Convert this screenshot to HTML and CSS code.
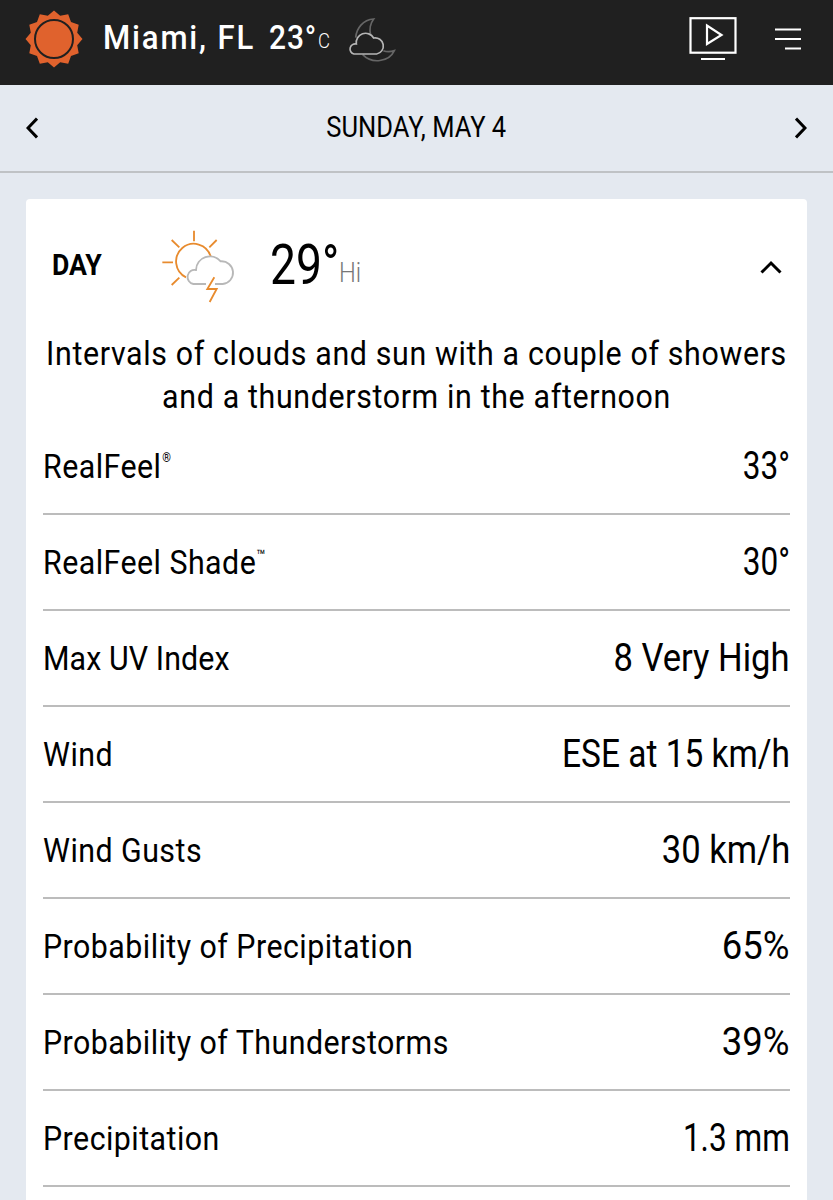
FILE: index.html
```
<!DOCTYPE html>
<html lang="en">
<head>
    <meta charset="UTF-8">
    <title>Miami, FL Daily Weather</title>
    <link rel="stylesheet" href="styles.css">
</head>
<body>
    <header class="header">
        <svg class="logo" viewBox="-30 -30 60 60">
            <polygon points="0,-28.5 6.2,-23.2 14.2,-24.7 17,-17 24.7,-14.2 23.2,-6.2 28.5,0 23.2,6.2 24.7,14.2 17,17 14.2,24.7 6.2,23.2 0,28.5 -6.2,23.2 -14.2,24.7 -17,17 -24.7,14.2 -23.2,6.2 -28.5,0 -23.2,-6.2 -24.7,-14.2 -17,-17 -14.2,-24.7 -6.2,-23.2"/>
            <circle r="19"/>
        </svg>
        <div class="city"><span class="narrow">Miami, FL</span></div>
        <div class="now"><span class="narrow">23°</span></div>
        <div class="unit"><span class="narrow">C</span></div>
        <svg class="moon" viewBox="354 50 150 138">
            <path class="crescent" d="M380 112C382 84 402 58 434 56C422 72 421 88 425 104M463 151C474 155 486 154 496 151C480 186 428 191 401 163"/>
            <path class="cloud" d="M375 161A15 15 0 0 1 382 131A28 28 0 0 1 434 113A24 24 0 0 1 443 161Z"/>
        </svg>
        <svg class="tv" viewBox="0 0 48 44">
            <rect x="1.5" y="1.2" width="45" height="34.5"/>
            <path d="M18 8.5V27L32.5 18ZM12 42H36"/>
        </svg>
        <svg class="menu" viewBox="0 0 26 24">
            <path d="M0 2.5H26M0 12H26M10 21.5H26"/>
        </svg>
    </header>

    <nav class="date-bar">
        <svg class="arrow" viewBox="0 0 12 22"><path d="M11 1.5L2 11L11 20.5"/></svg>
        <div class="date"><span class="narrow">SUNDAY, MAY 4</span></div>
        <svg class="arrow" viewBox="0 0 12 22"><path d="M1 1.5L10 11L1 20.5"/></svg>
    </nav>

    <main class="card">
        <div class="card-head">
            <div class="day"><span class="narrow">DAY</span></div>
            <svg class="day-icon" viewBox="420 115 228 228">
                <path class="sun" d="M572 200A53 53 0 1 0 498 263M522 123V155M455 151L478 173M590 151L568 173M427 218H459M455 286L478 264"/>
                <path class="cloud" d="M558 283H520A21 21 0 0 1 528 241A42 42 0 0 1 602 215A34 34 0 0 1 608 283H585"/>
                <path class="bolt" d="M583 263L562 298H590L569 337"/>
            </svg>
            <div class="high"><span class="narrow">29°</span></div>
            <div class="hi"><span class="narrow">Hi</span></div>
            <svg class="chevron" viewBox="0 0 22 14"><path d="M1.5 12.5L11 3L20.5 12.5"/></svg>
        </div>
        <p class="phrase">Intervals of clouds and sun with a couple of showers<br>and a thunderstorm in the afternoon</p>
        <div class="rows">
            <div class="row"><span class="label">RealFeel<sup>®</sup></span><span class="value tight">33°</span></div>
            <div class="row"><span class="label">RealFeel Shade<sup class="tm">™</sup></span><span class="value tight">30°</span></div>
            <div class="row"><span class="label uv">Max UV Index</span><span class="value">8 Very High</span></div>
            <div class="row"><span class="label">Wind</span><span class="value wind">ESE at 15 km/h</span></div>
            <div class="row"><span class="label">Wind Gusts</span><span class="value">30 km/h</span></div>
            <div class="row"><span class="label">Probability of Precipitation</span><span class="value percent">65%</span></div>
            <div class="row"><span class="label">Probability of Thunderstorms</span><span class="value percent">39%</span></div>
            <div class="row"><span class="label">Precipitation</span><span class="value tight">1.3 mm</span></div>
        </div>
    </main>
</body>
</html>
```
FILE: styles.css
```
* {
    box-sizing: border-box;
}
body {
    font-family: Roboto, "Liberation Sans", sans-serif;
    background: #e4e9f0;
    color: #000;
    margin: 0;
    height: 1200px;
    overflow: hidden;
}
svg {
    display: block;
    flex: none;
    fill: none;
}
.narrow {
    display: inline-block;
    transform: scaleX(0.88);
    transform-origin: left;
    white-space: nowrap;
}
.header {
    display: flex;
    align-items: flex-start;
    height: 85px;
    background: #202020;
    color: #fff;
    line-height: 40px;
}
.logo {
    width: 60px;
    height: 60px;
    margin: 9px 0 0 24px;
}
.logo polygon {
    fill: #e0622d;
}
.logo circle {
    stroke: #202020;
    stroke-width: 2;
}
.city {
    width: 166px;
    margin: 17px 0 0 19px;
    font-size: 34px;
    font-weight: 500;
    letter-spacing: 2px;
}
.city .narrow {
    transform: scaleX(0.915);
}
.now {
    width: 49px;
    margin-top: 17px;
    font-size: 34px;
    font-weight: 500;
    letter-spacing: 1px;
}
.unit {
    width: 29px;
    margin-top: 21px;
    font-size: 21px;
    font-weight: 300;
}
.moon {
    width: 50px;
    height: 46px;
    margin-top: 17px;
    stroke-width: 5;
}
.moon .crescent {
    stroke: #666;
}
.moon .cloud {
    stroke: #b5b5b5;
}
.tv {
    width: 48px;
    height: 44px;
    margin: 17px 38px 0 auto;
    stroke: #fff;
    stroke-width: 2.2;
}
.menu {
    width: 26px;
    height: 24px;
    margin: 27px 32px 0 0;
    stroke: #fff;
    stroke-width: 2;
}
.date-bar {
    display: flex;
    align-items: center;
    justify-content: space-between;
    height: 88px;
    padding: 0 26px;
    border-bottom: 2px solid #bfc2c5;
}
.arrow {
    width: 12px;
    height: 22px;
    stroke: #000;
    stroke-width: 3;
}
.date {
    font-size: 29px;
    line-height: 40px;
    margin-top: -3px;
}
.date .narrow {
    transform-origin: center;
}
.card {
    width: 781px;
    height: 1010px;
    margin: 26px 0 0 26px;
    background: #fff;
    border-radius: 4px;
}
.card-head {
    display: flex;
    align-items: flex-start;
    height: 133px;
    line-height: 60px;
}
.day {
    width: 108px;
    margin: 36px 0 0 26px;
    font-size: 29px;
    font-weight: 700;
}
.day .narrow {
    transform: scaleX(0.92);
}
.day-icon {
    width: 76px;
    height: 76px;
    margin-top: 29px;
    stroke-width: 5.5;
}
.sun, .bolt {
    stroke: #e88b2e;
}
.day-icon .cloud {
    stroke: #b8b8b8;
}
.high {
    width: 69px;
    margin: 36px 0 0 34px;
    font-size: 55px;
}
.high .narrow {
    transform: scaleX(0.84);
}
.hi {
    margin-top: 44px;
    font-size: 27px;
    font-weight: 300;
    color: #777;
}
.chevron {
    width: 22px;
    height: 14px;
    margin: 61px 25px 0 auto;
    stroke: #000;
    stroke-width: 3;
}
.phrase {
    margin: 0 -60px 1px;
    font-size: 33px;
    line-height: 43px;
    letter-spacing: 0.7px;
    text-align: center;
    transform: scaleX(0.92);
}
.rows {
    padding: 0 17px;
}
.row {
    display: flex;
    align-items: center;
    justify-content: space-between;
    height: 96px;
    border-bottom: 2px solid #bcbcbc;
}
.label {
    font-size: 33px;
    letter-spacing: 0.5px;
    transform: scaleX(0.92);
    transform-origin: left;
}
.label.uv {
    letter-spacing: 0.1px;
}
.label sup {
    font-size: 12px;
    line-height: 0;
    vertical-align: 16px;
    margin-left: 1px;
}
.label .tm {
    font-size: 16px;
    vertical-align: 13px;
    margin-left: 0;
}
.value {
    font-size: 38px;
    transform: scaleX(0.91);
    transform-origin: right;
}
.value.tight {
    transform: scaleX(0.83);
}
.value.wind {
    transform: scaleX(0.88);
}
.value.percent {
    transform: scaleX(0.96);
}
```
